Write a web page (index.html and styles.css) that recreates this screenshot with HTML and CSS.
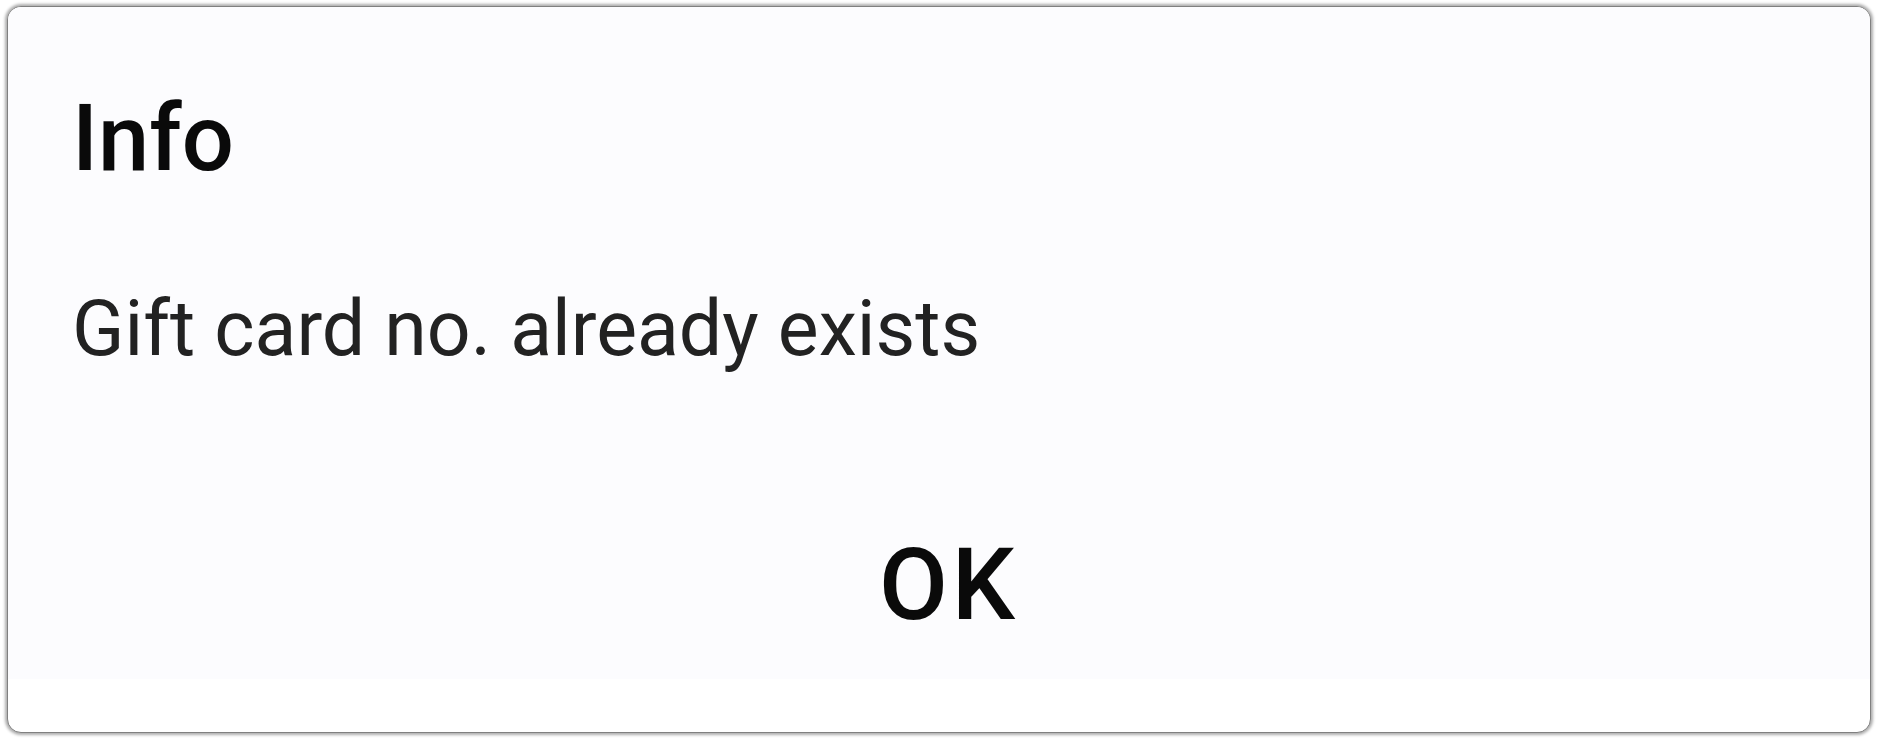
FILE: index.html
```html
<!DOCTYPE html>
<html>
<head>
<meta charset="utf-8">
<link rel="stylesheet" href="styles.css">
</head>
<body>
<div class="dialog">
  <div class="dialog-content">
    <h1 class="title">Info</h1>
    <p class="message">Gift card no. already exists</p>
    <div class="actions">
      <button class="btn-ok">OK</button>
    </div>
  </div>
  <div class="dialog-foot"></div>
</div>
</body>
</html>
```

FILE: styles.css
```css
html, body {
  margin: 0;
  padding: 0;
  background: #ffffff;
}
body {
  width: 1877px;
  height: 741px;
  box-sizing: border-box;
  padding: 6px 6px 8px 7px;
  font-family: Roboto, "Noto Sans", sans-serif;
}
.dialog {
  height: 100%;
  box-sizing: border-box;
  border: 1px solid #808080;
  border-radius: 14px;
  box-shadow: 0 0 3px 2px rgba(0,0,0,0.32);
  overflow: hidden;
  display: flex;
  flex-direction: column;
  background: #ffffff;
}
.dialog-content {
  flex: 1;
  background: #fcfcfe;
  padding: 86px 64px 44px 64px;
  display: flex;
  flex-direction: column;
}
.title {
  margin: 0;
  font-size: 92px;
  line-height: 1;
  font-weight: 500;
  color: #0a0a0a;
}
.message {
  margin: 106px 0 0 0;
  font-size: 77px;
  line-height: 1;
  font-weight: 400;
  color: #222222;
}
.actions {
  margin-top: 167px;
  display: flex;
  justify-content: center;
  padding-left: 20px;
}
.btn-ok {
  background: none;
  border: none;
  padding: 0;
  font-family: Roboto, "Noto Sans", sans-serif;
  font-size: 100px;
  line-height: 1;
  font-weight: 500;
  letter-spacing: 4px;
  color: #0a0a0a;
}
.dialog-foot {
  height: 54px;
  flex: none;
}
```
